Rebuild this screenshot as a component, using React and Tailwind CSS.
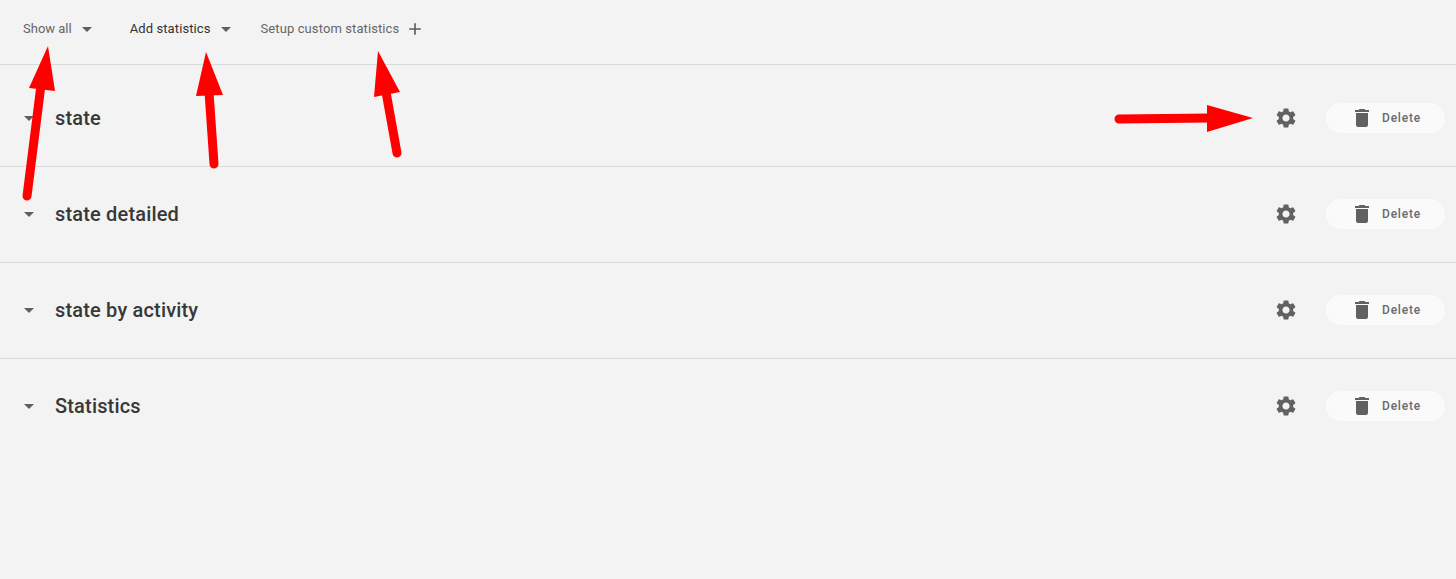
import { MdAdd, MdArrowDropDown, MdDelete, MdSettings } from 'react-icons/md';

const rows = ['state', 'state detailed', 'state by activity', 'Statistics'];

function StatRow({ title, first }) {
	return (
		<div
			className={`flex items-center border-[#d9d9d9] ${
				first ? 'h-[102px] border-b pt-[4px]' : 'h-[96px] pb-[2px] [&:not(:last-child)]:border-b'
			}`}
		>
			<MdArrowDropDown className="ml-[17px] h-6 w-6 text-[#5f5f5f]" />
			<span className="ml-[14px] text-[20px] font-medium tracking-[0.17px] text-[#383838]">{title}</span>
			<MdSettings className="ml-auto h-6 w-6 text-[#616161]" />
			<button className="ml-[28px] mr-[11px] flex h-[30px] w-[119px] items-center rounded-full bg-[#fafafa] pl-[24px]">
				<MdDelete className="h-6 w-6 text-[#616161]" />
				<span className="ml-[8px] text-[12px] font-medium tracking-[0.8px] text-[#666a70]">Delete</span>
			</button>
		</div>
	);
}

function Arrow({ x1, y1, x2, y2, head }) {
	return (
		<>
			<line x1={x1} y1={y1} x2={x2} y2={y2} stroke="#ff0000" strokeWidth="9" strokeLinecap="round" />
			<polygon points={head} fill="#ff0000" />
		</>
	);
}

export default function App() {
	return (
		<div className="relative h-[579px] w-full overflow-hidden bg-[#f3f3f3] font-['Roboto',sans-serif]">
			<div className="flex h-[65px] items-center border-b border-[#d9d9d9] pb-[6px] pl-[23px] text-[13px]">
				<span className="text-[#666666]">Show all</span>
				<MdArrowDropDown className="ml-[3px] h-6 w-6 text-[#5f5f5f]" />
				<span className="ml-[31px] tracking-[0.1px] text-[#333333]">Add statistics</span>
				<MdArrowDropDown className="ml-[3px] h-6 w-6 text-[#5f5f5f]" />
				<span className="ml-[23px] tracking-[0.1px] text-[#666666]">Setup custom statistics</span>
				<MdAdd className="ml-[6px] h-[20px] w-[20px] text-[#5f5f5f]" />
			</div>
			<div>
				{rows.map((title, i) => (
					<StatRow key={title} title={title} first={i === 0} />
				))}
			</div>

			{/* Red annotation arrows */}
			<svg className="pointer-events-none absolute inset-0 h-full w-full">
				<Arrow x1={27} y1={196} x2={41} y2={85} head="48,46 29,88 55,91" />
				<Arrow x1={214} y1={164} x2={209} y2={92} head="206,52 196,96 223,95" />
				<Arrow x1={397} y1={153} x2={386} y2={92} head="378,51 374,97 400,92" />
				<Arrow x1={1119} y1={119} x2={1210} y2={118} head="1253,118 1207,105 1207,132" />
			</svg>
		</div>
	);
}
